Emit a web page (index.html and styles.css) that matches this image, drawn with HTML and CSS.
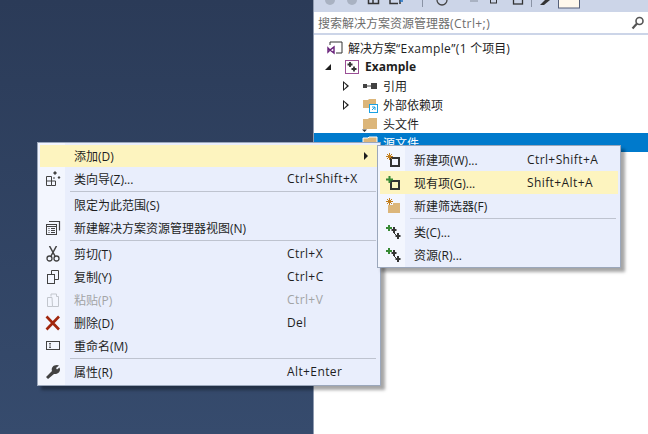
FILE: index.html
```html
<!DOCTYPE html>
<html>
<head>
  <meta charset="utf-8">
  <title>解决方案资源管理器</title>
  <link rel="stylesheet" href="styles.css">
</head>
<body>
  <div class="desk"></div>

  <div class="panel">
    <div class="toolbar">
      <svg class="toolbar-icons" width="334" height="11" viewBox="0 0 334 11">
        <circle cx="16" cy="0" r="5" fill="#a9b2c2"/>
        <circle cx="38" cy="0" r="5" fill="#a9b2c2"/>
        <path d="M54.5 0v3.5h10V0M59 0v3" fill="none" stroke="#333" stroke-width="1.5"/>
        <path d="M76 0v3.5h8M86 0v4" fill="none" stroke="#333" stroke-width="1.5"/>
        <path d="M86 1h3" stroke="#1b6ec2" stroke-width="1.5"/>
        <path d="M108.5 0v7" stroke="#8a93a5"/>
        <circle cx="128" cy="0" r="5" fill="none" stroke="#444" stroke-width="1.3"/>
        <path d="M156 1h8" stroke="#a9b2c2" stroke-width="2"/>
        <rect x="176.500" y="-2" width="6" height="5" fill="none" stroke="#333"/>
        <rect x="199.500" y="-2" width="9" height="6" fill="none" stroke="#333" stroke-width="1.300"/>
        <path d="M217.500 0v7" stroke="#8a93a5"/>
        <path d="M226 5l5-5h5l-6 5z" fill="#333"/>
        <rect x="244.500" y="-2" width="21" height="10" fill="#fff8ec" stroke="#56617a"/>
      </svg>
    </div>
    <div class="search">
      <span class="search-text">搜索解决方案资源管理器<span class="wide">(Ctrl+;)</span></span>
      <svg width="14" height="14" viewBox="0 0 14 14">
        <circle cx="8.500" cy="5" r="3.500" fill="none" stroke="#555" stroke-width="1.600"/>
        <path d="M6 7.500L1.500 12.500" stroke="#555" stroke-width="2.200"/>
      </svg>
    </div>
    <ul class="tree">
      <li class="node">
        <svg class="tree-icon" width="16" height="16" viewBox="0 0 16 16">
          <path d="M3 5V2h12v11H9" fill="none" stroke="#333"/>
          <path d="M1 8l2 2 4-3v6l-4-3-2 2z" fill="none" stroke="#68217a" stroke-width="1.400"/>
        </svg>
        <span>解决方案<span class="wide">“Example”(1</span> 个项目)</span>
      </li>
      <li class="node depth-1">
        <span class="open-arrow"></span>
        <svg class="tree-icon" width="16" height="16" viewBox="0 0 16 16">
          <rect x="1.500" y="1.500" width="13" height="13" fill="#fff" stroke="#9b4f96"/>
          <path d="M6 3v5M3.500 5.500h5M10 7.500v5M7.500 10h5" stroke="#333" stroke-width="1.800"/>
        </svg>
        <strong>Example</strong>
      </li>
      <li class="node depth-2">
        <span class="closed-arrow"></span>
        <svg class="tree-icon" width="16" height="16" viewBox="0 0 16 16">
          <rect x="1" y="6" width="4" height="4" fill="#424242"/>
          <rect x="9" y="5" width="6" height="6" fill="#424242"/>
          <path d="M5 8h4" stroke="#424242"/>
        </svg>
        <span>引用</span>
      </li>
      <li class="node depth-2">
        <span class="closed-arrow"></span>
        <svg class="tree-icon" width="16" height="16" viewBox="0 0 16 16">
          <path d="M1 3h5l1-1h7v9H1z" fill="#dcb67a"/>
          <rect x="7.500" y="7.500" width="8" height="8" fill="#fff" stroke="#1ba1e2"/>
          <path d="M10 10h3v3M10 13l3-3" fill="none" stroke="#1ba1e2"/>
        </svg>
        <span>外部依赖项</span>
      </li>
      <li class="node no-arrow">
        <svg class="tree-icon" width="16" height="16" viewBox="0 0 16 16">
          <path d="M1 3h5l1-1h8v11H1z" fill="#dcb67a"/>
          <path d="M0 13.500h5L2.500 16z" fill="#333"/>
        </svg>
        <span>头文件</span>
      </li>
      <li class="node no-arrow selected">
        <svg class="tree-icon" width="16" height="16" viewBox="0 0 16 16">
          <path d="M1 3h5l1-1h8v11H1z" fill="#dcb67a" stroke="#fff"/>
        </svg>
        <span>源文件</span>
      </li>
    </ul>
  </div>

  <div class="menu main-menu">
    <div class="menu-item active">
      <span class="menu-icon"></span>
      <span class="menu-label">添加(D)</span>
      <span class="menu-arrow"></span>
    </div>
    <div class="menu-item">
      <span class="menu-icon">
        <svg width="16" height="16" viewBox="0 0 16 16">
          <path d="M1.500 5.500h5v9h-5zM1.500 10h9v4.500h-4" fill="none" stroke="#424242"/>
          <path d="M10 0l2 2-2 2-2-2zM14 5l1.500 1.500L14 8l-1.500-1.500zM9 6l1 1-1 1-1-1z" fill="#424242"/>
        </svg>
      </span>
      <span class="menu-label">类向导(Z)...</span>
      <span class="menu-key">Ctrl+Shift+X</span>
    </div>
    <div class="menu-sep"></div>
    <div class="menu-item">
      <span class="menu-icon"></span>
      <span class="menu-label">限定为此范围(S)</span>
    </div>
    <div class="menu-item">
      <span class="menu-icon">
        <svg width="16" height="16" viewBox="0 0 16 16">
          <rect x="1.500" y="4.500" width="10" height="10" fill="none" stroke="#424242"/>
          <path d="M4 1.500h10.500v9M1.500 6.500h10" fill="none" stroke="#424242" stroke-width="1.200"/>
          <path d="M3.500 8.500h1M3.500 10.500h1M3.500 12.500h1M6 8.500h4M6 10.500h4M6 12.500h4" stroke="#424242"/>
        </svg>
      </span>
      <span class="menu-label">新建解决方案资源管理器视图(N)</span>
    </div>
    <div class="menu-sep"></div>
    <div class="menu-item">
      <span class="menu-icon">
        <svg width="16" height="16" viewBox="0 0 16 16">
          <path d="M4.500 0l5.500 10M11.500 0L6 10" fill="none" stroke="#424242" stroke-width="1.500"/>
          <circle cx="4.500" cy="12.500" r="2.500" fill="none" stroke="#424242" stroke-width="1.300"/>
          <circle cx="11.500" cy="12.500" r="2.500" fill="none" stroke="#424242" stroke-width="1.300"/>
        </svg>
      </span>
      <span class="menu-label">剪切(T)</span>
      <span class="menu-key">Ctrl+X</span>
    </div>
    <div class="menu-item">
      <span class="menu-icon">
        <svg width="16" height="16" viewBox="0 0 16 16">
          <rect x="2.500" y="5.500" width="7" height="9" fill="none" stroke="#424242"/>
          <path d="M6.500 5V1.500h7v9H10" fill="none" stroke="#424242"/>
        </svg>
      </span>
      <span class="menu-label">复制(Y)</span>
      <span class="menu-key">Ctrl+C</span>
    </div>
    <div class="menu-item disabled">
      <span class="menu-icon">
        <svg width="16" height="16" viewBox="0 0 16 16">
          <path d="M7 5.500H2.500v9h5zM7.500 14.500h6v-10h-2V2H6v2.500" fill="none" stroke="#c2c6cd"/>
        </svg>
      </span>
      <span class="menu-label">粘贴(P)</span>
      <span class="menu-key">Ctrl+V</span>
    </div>
    <div class="menu-item">
      <span class="menu-icon">
        <svg width="16" height="16" viewBox="0 0 16 16">
          <path d="M1.500 1.500L14 14.500M14 1.500L1.500 14.500" stroke="#a1260d" stroke-width="2.600"/>
        </svg>
      </span>
      <span class="menu-label">删除(D)</span>
      <span class="menu-key">Del</span>
    </div>
    <div class="menu-item">
      <span class="menu-icon">
        <svg width="16" height="16" viewBox="0 0 16 16">
          <rect x="1.500" y="3.500" width="13" height="8" fill="none" stroke="#424242"/>
          <path d="M4 5.500h2M4 9.500h2M5 5.500v4" stroke="#424242" stroke-width="0.800"/>
        </svg>
      </span>
      <span class="menu-label">重命名(M)</span>
    </div>
    <div class="menu-sep"></div>
    <div class="menu-item">
      <span class="menu-icon">
        <svg width="16" height="16" viewBox="0 0 16 16">
          <path d="M1 13l6-6c-1-3 1-6 5-6l2 .5L11 4l1 1.500 2.500-2 .5 2c0 3-3 5-6 4.500L3 15z" fill="#424242"/>
        </svg>
      </span>
      <span class="menu-label">属性(R)</span>
      <span class="menu-key">Alt+Enter</span>
    </div>
  </div>

  <div class="menu sub-menu">
    <div class="menu-item">
      <span class="menu-icon">
        <svg width="16" height="16" viewBox="0 0 16 16">
          <rect x="5" y="6" width="8" height="8" fill="none" stroke="#333" stroke-width="2"/>
          <path d="M3.500 1v7M0 4.500h7M1 2l5 5M6 2L1 7" stroke="#c27d1a"/>
        </svg>
      </span>
      <span class="menu-label">新建项(W)...</span>
      <span class="menu-key">Ctrl+Shift+A</span>
    </div>
    <div class="menu-item active">
      <span class="menu-icon">
        <svg width="16" height="16" viewBox="0 0 16 16">
          <rect x="5" y="6" width="8" height="8" fill="none" stroke="#333" stroke-width="2"/>
          <path d="M3.500 1v7M0 4.500h7" stroke="#388a34" stroke-width="2"/>
        </svg>
      </span>
      <span class="menu-label">现有项(G)...</span>
      <span class="menu-key">Shift+Alt+A</span>
    </div>
    <div class="menu-item">
      <span class="menu-icon">
        <svg width="16" height="16" viewBox="0 0 16 16">
          <path d="M2 7h5V5h7v10H2z" fill="#dcb67a"/>
          <path d="M3.500 0v7M0 3.500h7M1 1l5 5M6 1L1 6" stroke="#c27d1a"/>
        </svg>
      </span>
      <span class="menu-label">新建筛选器(F)</span>
    </div>
    <div class="menu-sep"></div>
    <div class="menu-item">
      <span class="menu-icon">
        <svg width="16" height="16" viewBox="0 0 16 16">
          <path d="M3 1v6M0 4h6" stroke="#388a34" stroke-width="2"/>
          <path d="M8 3v6M5.500 6h5M12 9v6M9.500 12h5" stroke="#333" stroke-width="2"/>
          <path d="M8 9l3 3" stroke="#333"/>
        </svg>
      </span>
      <span class="menu-label">类(C)...</span>
    </div>
    <div class="menu-item">
      <span class="menu-icon">
        <svg width="16" height="16" viewBox="0 0 16 16">
          <path d="M3 1v6M0 4h6" stroke="#388a34" stroke-width="2"/>
          <path d="M8 3v6M5.500 6h5M12 9v6M9.500 12h5" stroke="#333" stroke-width="2"/>
          <path d="M8 9l3 3" stroke="#333"/>
        </svg>
      </span>
      <span class="menu-label">资源(R)...</span>
    </div>
  </div>
</body>
</html>
```

FILE: styles.css
```css
* {
  box-sizing: border-box;
}

html, body {
  height: 100%;
}

body {
  margin: 0;
  display: flex;
  overflow: hidden;
  font-family: "Open Sans", "Noto Sans CJK SC", sans-serif;
  font-size: 12px;
  color: #1e1e1e;
}

.desk {
  flex: 1;
  background: linear-gradient(#2b3b58, #364b6d);
}

.panel {
  width: 335px;
  background: #fff;
  border-left: 1px solid #8f9bb0;
}

.toolbar {
  height: 11px;
  background: #ccd5e8;
}

.toolbar-icons {
  display: block;
}

.search {
  height: 24px;
  padding: 0 3px 0 4px;
  display: flex;
  align-items: center;
  justify-content: space-between;
  background: #fff;
  border-top: 1px solid #ccd5e8;
  border-bottom: 2px solid #ccd5e8;
  color: #6d6d6d;
}

.wide {
  letter-spacing: 0.4px;
}

.tree {
  list-style: none;
  margin: 3px 0 0;
  padding: 0;
}

.node {
  height: 19px;
  display: flex;
  align-items: center;
  padding-left: 13px;
  white-space: nowrap;
}

.tree-icon {
  margin-right: 5px;
  flex: none;
}

.depth-1 {
  padding-left: 11px;
}

.depth-2 {
  padding-left: 29px;
}

.no-arrow {
  padding-left: 48px;
}

.selected {
  background: #007acc;
  color: #fff;
}

.open-arrow {
  width: 0;
  height: 0;
  margin-right: 13px;
  border-left: 6px solid transparent;
  border-bottom: 6px solid #1e1e1e;
}

.closed-arrow {
  width: 0;
  height: 0;
  margin-right: 13px;
  position: relative;
  border-top: 5px solid transparent;
  border-bottom: 5px solid transparent;
  border-left: 6px solid #1e1e1e;
}

.closed-arrow::after {
  content: "";
  position: absolute;
  left: -5px;
  top: -3px;
  border-top: 3px solid transparent;
  border-bottom: 3px solid transparent;
  border-left: 3px solid #fff;
}

/* context menus */
.menu {
  position: absolute;
  padding: 2px;
  background: linear-gradient(90deg, #f3f6fe 27px, #e9eefc 27px);
  border: 1px solid #9ba7bb;
  box-shadow: 4px 4px 3px rgba(0, 0, 0, 0.35);
}

.main-menu {
  left: 37px;
  top: 142px;
  width: 344px;
}

.main-menu .menu-item:first-child {
  height: 22px;
}

.sub-menu {
  left: 377px;
  top: 145px;
  width: 244px;
  padding-bottom: 1px;
}

.menu-item {
  height: 23px;
  display: flex;
  align-items: center;
  white-space: nowrap;
}

.menu-item.active {
  background: #fdf4bf;
}

.menu-item.disabled {
  color: #a2a4a5;
}

.menu-icon {
  width: 26px;
  height: 16px;
  margin-right: 8px;
  padding-left: 5px;
  flex: none;
}

.sub-menu .menu-icon {
  padding-left: 6px;
}

.menu-icon svg {
  display: block;
}

.menu-label {
  flex: 1;
}

.menu-key {
  flex: none;
  width: 91px;
  letter-spacing: 0.4px;
}

.menu-arrow {
  width: 0;
  height: 0;
  margin-right: 10px;
  border-top: 4px solid transparent;
  border-bottom: 4px solid transparent;
  border-left: 4px solid #1e1e1e;
}

.menu-sep {
  height: 3px;
  margin: 0 2px 0 30px;
  padding-top: 1px;
}

.menu-sep::before {
  content: "";
  display: block;
  height: 1px;
  background: #bec3cf;
}
```
